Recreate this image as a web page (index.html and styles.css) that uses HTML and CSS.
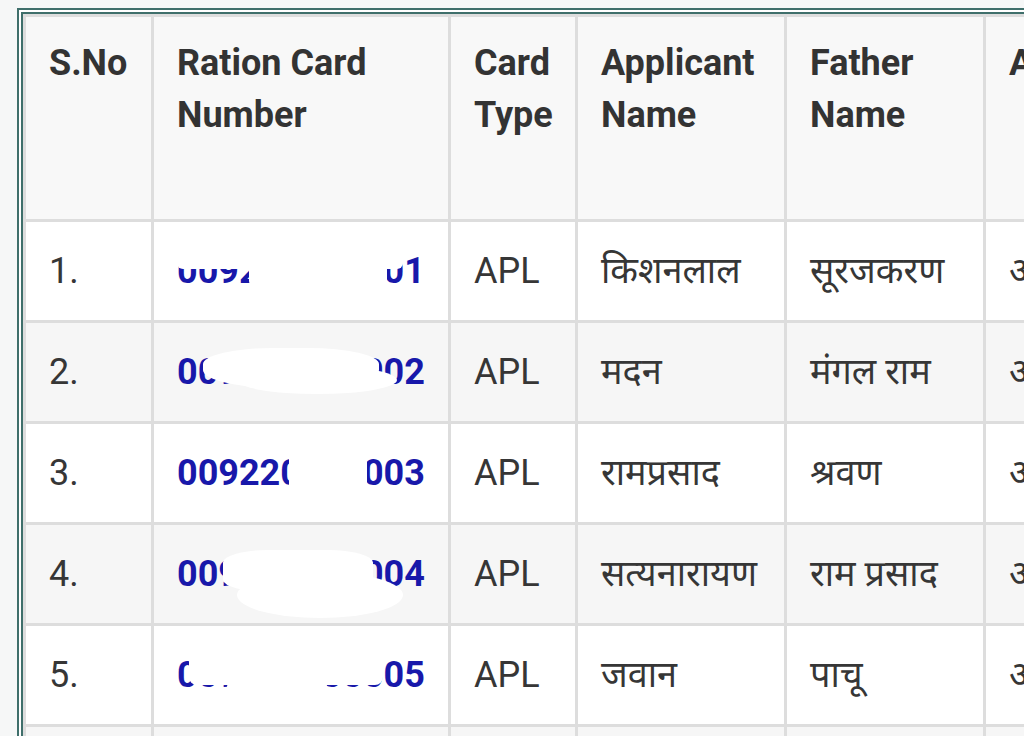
FILE: index.html
```html
<!DOCTYPE html>
<html lang="hi">
<head>
<meta charset="utf-8">
<title>Ration Card List</title>
<link rel="stylesheet" href="styles.css">
</head>
<body>
<div class="frame">
  <table class="grid">
    <colgroup>
      <col class="c-sno">
      <col class="c-num">
      <col class="c-type">
      <col class="c-app">
      <col class="c-father">
      <col class="c-more">
    </colgroup>
    <thead>
      <tr class="head">
        <th>S.No</th>
        <th>Ration Card Number</th>
        <th>Card Type</th>
        <th>Applicant Name</th>
        <th>Father Name</th>
        <th>Address</th>
      </tr>
    </thead>
    <tbody>
      <tr>
        <td>1.</td>
        <td><span class="num">009220000001<span class="mask m1a"></span><span class="mask m1b"></span></span></td>
        <td>APL</td>
        <td>किशनलाल</td>
        <td>सूरजकरण</td>
        <td>अजमेर</td>
      </tr>
      <tr>
        <td>2.</td>
        <td><span class="num">009220000002<span class="mask m2a"></span><span class="mask m2b"></span></span></td>
        <td>APL</td>
        <td>मदन</td>
        <td>मंगल राम</td>
        <td>अजमेर</td>
      </tr>
      <tr>
        <td>3.</td>
        <td><span class="num">009220000003<span class="mask m3a"></span></span></td>
        <td>APL</td>
        <td>रामप्रसाद</td>
        <td>श्रवण</td>
        <td>अजमेर</td>
      </tr>
      <tr>
        <td>4.</td>
        <td><span class="num">009220000004<span class="mask m4a"></span><span class="mask m4b"></span></span></td>
        <td>APL</td>
        <td>सत्यनारायण</td>
        <td>राम प्रसाद</td>
        <td>अजमेर</td>
      </tr>
      <tr>
        <td>5.</td>
        <td><span class="num">009220000005<span class="mask m5a"></span><span class="mask m5b"></span></span></td>
        <td>APL</td>
        <td>जवान</td>
        <td>पाचू</td>
        <td>अजमेर</td>
      </tr>
      <tr>
        <td>6.</td>
        <td><span class="num">009220000006</span></td>
        <td>APL</td>
        <td>गोपाल</td>
        <td>भैरू</td>
        <td>अजमेर</td>
      </tr>
    </tbody>
  </table>
</div>
</body>
</html>
```

FILE: styles.css
```css
html, body {
  margin: 0;
  padding: 0;
  background: #f6f7f7;
  overflow: hidden;
  width: 1024px;
  height: 736px;
}

.frame {
  margin: 8px 0 0 17px;
  border: 6px double #3f6f6b;
  border-right: 0;
  width: 1400px;
  background: #ffffff;
}

.grid {
  border-collapse: collapse;
  table-layout: fixed;
  width: 1390px;
  font-family: Roboto, "Noto Sans", "Noto Sans Devanagari", "Lohit Devanagari", sans-serif;
  font-size: 36px;
  line-height: 52px;
  color: #363636;
}

.c-sno { width: 128px; }
.c-num { width: 297px; }
.c-type { width: 127px; }
.c-app { width: 209px; }
.c-father { width: 199px; }
.c-more { width: 430px; }

.grid th,
.grid td {
  border: 3px solid #dddddd;
  padding: 0 10px 0 23px;
  text-align: left;
  white-space: nowrap;
  overflow: hidden;
}

.grid th {
  font-weight: 700;
  color: #333333;
  vertical-align: top;
  padding-top: 20px;
  white-space: normal;
  background: #f8f8f8;
}

.head {
  height: 205px;
}

.grid tbody tr {
  height: 101px;
}

.grid tbody tr:nth-child(even) td {
  background: #f6f6f6;
}

.grid td {
  vertical-align: middle;
}

.num {
  position: relative;
  display: inline-block;
  color: #1818aa;
  font-weight: 700;
}

.mask {
  position: absolute;
  background: #ffffff;
}

.m1a { left: 0; top: 4px; width: 226px; height: 20px; border-radius: 6px; }
.m1b { left: 72px; top: 10px; width: 138px; height: 34px; border-radius: 8px; }

.m2a { left: 26px; top: 2px; width: 176px; height: 40px; border-radius: 40% 40% 45% 45%; }
.m2b { left: 60px; top: 20px; width: 160px; height: 28px; border-radius: 50%; }

.m3a { left: 112px; top: 4px; width: 78px; height: 40px; border-radius: 6px; }

.m4a { left: 46px; top: 2px; width: 150px; height: 42px; border-radius: 30%; }
.m4b { left: 60px; top: 24px; width: 166px; height: 46px; border-radius: 50%; }

.m5a { left: 12px; top: 2px; width: 194px; height: 34px; border-radius: 8px; }
.m5b { left: 50px; top: 34px; width: 100px; height: 10px; border-radius: 4px; }
```
